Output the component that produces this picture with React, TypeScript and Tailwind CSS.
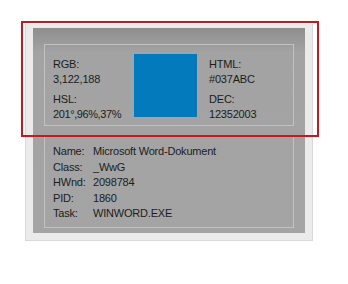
export default function App() {
  const info = [
    ["Name:", "Microsoft Word-Dokument"],
    ["Class:", "_WwG"],
    ["HWnd:", "2098784"],
    ["PID:", "1860"],
    ["Task:", "WINWORD.EXE"],
  ];

  return (
    <div
      className="relative w-[348px] h-[284px] bg-white pt-[24px] pl-[25px] text-[11px] tracking-[-0.2px] text-[#1c1c1c]"
      style={{ fontFamily: '"Liberation Sans", Arial, sans-serif' }}
    >
      {/* light outer panel */}
      <div className="w-[288px] h-[217px] bg-[#ebebeb] border border-[#d9d9d9] border-t-0 pl-[7px] pr-[7px] pt-[4px]">
        {/* dark capture panel */}
        <div className="h-[205px] bg-gradient-to-b from-[#8e8e8e] via-[#a3a3a3] via-[12%] to-[#a4a4a4] pl-[11px] pr-[11px] pt-[16px]">
          <div className="h-[82px] border border-[#c2c2c2] flex pt-[12px] pl-[8px]">
            <div className="w-[81px] leading-[15px]">
              <div>RGB:</div>
              <div>3,122,188</div>
              <div className="mt-[5px]">HSL:</div>
              <div className="tracking-[-0.4px]">201°,96%,37%</div>
            </div>
            <div className="w-[63px] h-[63px] mt-[-3px] bg-[#037abc]" />
            <div className="ml-[12px] leading-[15px]">
              <div>HTML:</div>
              <div>#037ABC</div>
              <div className="mt-[5px]">DEC:</div>
              <div>12352003</div>
            </div>
          </div>
          <div className="mt-[9px] h-[93px] border border-[#c2c2c2] pt-[8px] pl-[8px] leading-[15.6px]">
            {info.map(([k, v]) => (
              <div key={k} className="flex">
                <span className="w-[40px]">{k}</span>
                <span>{v}</span>
              </div>
            ))}
          </div>
        </div>
      </div>

      {/* highlight rectangle */}
      <div className="absolute left-[21px] top-[21px] w-[298px] h-[116px] border-2 border-[#c8171f]" />
    </div>
  );
}
